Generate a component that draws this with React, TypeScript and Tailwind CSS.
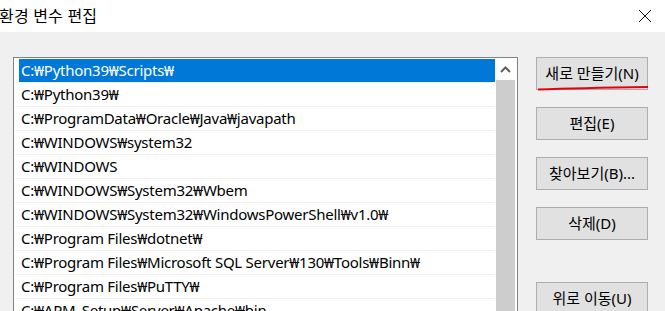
import { useState } from "react";

const paths = [
  "C:₩Python39₩Scripts₩",
  "C:₩Python39₩",
  "C:₩ProgramData₩Oracle₩Java₩javapath",
  "C:₩WINDOWS₩system32",
  "C:₩WINDOWS",
  "C:₩WINDOWS₩System32₩Wbem",
  "C:₩WINDOWS₩System32₩WindowsPowerShell₩v1.0₩",
  "C:₩Program Files₩dotnet₩",
  "C:₩Program Files₩Microsoft SQL Server₩130₩Tools₩Binn₩",
  "C:₩Program Files₩PuTTY₩",
  "C:₩APM_Setup₩Server₩Apache₩bin",
];

const font = "font-['Noto_Sans','Noto_Sans_CJK_KR',sans-serif]";

const WinButton = ({ label, className = "" }: { label: string; className?: string }) => (
  <button
    className={`h-[33px] w-[112px] border border-[#adadad] bg-[#e1e1e1] text-[15px] leading-none text-black ${className}`}
  >
    {label}
  </button>
);

const App = () => {
  const [selected, setSelected] = useState(0);

  return (
    <div className={`flex h-[311px] w-[665px] flex-col overflow-hidden bg-white ${font}`}>
      {/* title bar */}
      <div className="flex h-8 shrink-0 items-center justify-between bg-white">
        <span className="-ml-[1px] text-[16px] tracking-[0.2px] text-black">환경 변수 편집</span>
        <svg width="14" height="14" viewBox="0 0 14 14" className="mr-[13px]">
          <path d="M1 1 L13 13 M13 1 L1 13" stroke="#111" strokeWidth="1" />
        </svg>
      </div>

      {/* body */}
      <div className="flex flex-1 gap-[18px] bg-[#f0f0f0] pl-[13px] pt-[25px]">
        {/* list box */}
        <div className="flex h-[300px] w-[505px] shrink-0 border border-[#828282] bg-white pt-[1px]">
          <div className="ml-[1px] flex w-[480px] flex-col">
            {paths.map((p, i) => (
              <div key={p} className="h-6 border-b border-[#f0f0f0]" onClick={() => setSelected(i)}>
                <div
                  className={`ml-1 flex h-[23px] items-center whitespace-nowrap pl-[2px] text-[15px] tracking-[-0.25px] ${
                    i === selected ? "bg-[#0078d7] text-white" : "text-black"
                  }`}
                >
                  {p}
                </div>
              </div>
            ))}
          </div>
          {/* scrollbar */}
          <div className="flex w-[22px] flex-col pl-[1px] pr-[2px]">
            <div className="flex h-[21px] items-center justify-center">
              <svg width="11" height="7" viewBox="0 0 11 7">
                <path d="M1 6 L5.5 1.5 L10 6" fill="none" stroke="#606060" strokeWidth="2" />
              </svg>
            </div>
            <div className="flex-1 bg-[#cdcdcd]" />
          </div>
        </div>

        {/* buttons */}
        <div className="flex flex-col">
          <div className="relative">
            <WinButton label="새로 만들기(N)" />
            <svg className="absolute left-0 top-[27px]" width="114" height="8" viewBox="0 0 114 8">
              <path d="M2 5.5 C 30 4.5, 80 3.5, 112 3" fill="none" stroke="#e8000b" strokeWidth="2" />
            </svg>
          </div>
          <WinButton label="편집(E)" className="mt-[17px]" />
          <WinButton label="찾아보기(B)..." className="mt-[17px]" />
          <WinButton label="삭제(D)" className="mt-[17px]" />
          <WinButton label="위로 이동(U)" className="mt-[42px]" />
        </div>
      </div>
    </div>
  );
};

export default App;
